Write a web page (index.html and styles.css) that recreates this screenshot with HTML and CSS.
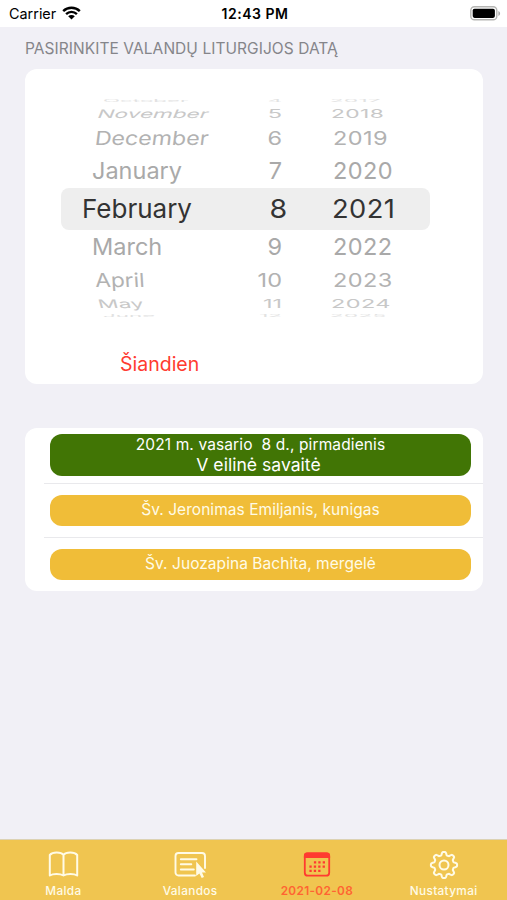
FILE: index.html
```html
<!DOCTYPE html>
<html lang="lt">
<head>
    <meta charset="UTF-8">
    <meta name="viewport" content="width=device-width, initial-scale=1.0">
    <title>Valandų liturgija</title>
    <link rel="stylesheet" href="styles.css">
</head>
<body>
    <header class="status-bar">
        <div class="carrier">
            <span>Carrier</span>
            <svg class="wifi" viewBox="0 0 19 14" width="19" height="14">
                <path d="M1.2 5.1a11.8 11.8 0 0 1 16.6 0M4.1 8.1a7.7 7.7 0 0 1 10.8 0" fill="none" stroke="#000" stroke-width="2.4"/>
                <path d="M6.2 10.3a4.7 4.7 0 0 1 6.6 0L9.5 13.6z"/>
            </svg>
        </div>
        <div class="clock">12:43 PM</div>
        <svg class="battery" viewBox="0 0 31 15" width="31" height="15">
            <rect x=".8" y=".8" width="26" height="13" rx="3.6" fill="#fff" stroke="#b5b5b3" stroke-width="1.4"/>
            <rect x="2.7" y="2.7" width="22.2" height="9.2" rx="1.8"/>
            <path d="M28.4 5v5c1-.4 1.7-1.4 1.7-2.5s-.7-2.1-1.7-2.5z" fill="#aaa"/>
        </svg>
    </header>

    <main>
        <h1 class="section-title">PASIRINKITE VALANDŲ LITURGIJOS DATĄ</h1>

        <section class="card date-card">
            <div class="picker">
                <div class="row far-4 up"><span class="month">October</span><span class="day">4</span><span class="year">2017</span></div>
                <div class="row far-3 up"><span class="month">November</span><span class="day">5</span><span class="year">2018</span></div>
                <div class="row far-2 up"><span class="month">December</span><span class="day">6</span><span class="year">2019</span></div>
                <div class="row far-1 up"><span class="month">January</span><span class="day">7</span><span class="year">2020</span></div>
                <div class="row selected"><span class="month">February</span><span class="day">8</span><span class="year">2021</span></div>
                <div class="row far-1 down"><span class="month">March</span><span class="day">9</span><span class="year">2022</span></div>
                <div class="row far-2 down"><span class="month">April</span><span class="day">10</span><span class="year">2023</span></div>
                <div class="row far-3 down"><span class="month">May</span><span class="day">11</span><span class="year">2024</span></div>
                <div class="row far-4 down"><span class="month">June</span><span class="day">12</span><span class="year">2025</span></div>
            </div>
            <button class="today">Šiandien</button>
        </section>

        <section class="card day-list">
            <div class="day-item first">
                <div class="pill green">
                    <span class="date">2021 m. vasario&nbsp; 8 d., pirmadienis</span>
                    <span class="week">V eilinė savaitė</span>
                </div>
            </div>
            <div class="day-item">
                <div class="pill gold">Šv. Jeronimas Emiljanis, kunigas</div>
            </div>
            <div class="day-item">
                <div class="pill gold">Šv. Juozapina Bachita, mergelė</div>
            </div>
        </section>
    </main>

    <nav class="tab-bar">
        <a class="tab">
            <svg viewBox="0 0 32 32" width="32" height="32" fill="none" stroke="currentColor" stroke-width="2" stroke-linejoin="round" stroke-linecap="round">
                <path d="M16.500 6C14 2.800 5.500 2.800 2.800 6V26.500C6 24.400 13 24.400 16.500 26.500C20 24.400 27 24.400 30.200 26.500V6C27.500 2.800 19 2.800 16.500 6ZM16.500 6V26.500"/>
            </svg>
            <span>Malda</span>
        </a>
        <a class="tab">
            <svg viewBox="0 0 32 32" width="32" height="32" fill="none" stroke="currentColor" stroke-width="1.9" stroke-linecap="round">
                <path d="M21 26.500H4.500a3 3 0 0 1-3-3V7a3 3 0 0 1 3-3h23.500a3 3 0 0 1 3 3V19"/>
                <path d="M6.800 10.200H22.500M6.800 15.300h10.500M6.800 20.500h13"/>
                <path d="M22.200 12.500v14.500l3.200-2.600 2.300 4.600 2.300-1-2-4.500h4z" fill="currentColor" stroke="none"/>
            </svg>
            <span>Valandos</span>
        </a>
        <a class="tab active">
            <svg viewBox="0 0 32 32" width="32" height="32" fill="none" stroke="currentColor">
                <rect x="3.800" y="4.300" width="24.400" height="22.400" rx="3" stroke-width="1.8"/>
                <path d="M2.900 9V6.500a3 3 0 0 1 3-3h20.200a3 3 0 0 1 3 3v2.500z" fill="currentColor" stroke="none"/>
                <path d="M12.900 13.300h12.500M8.400 17.600h17M8.400 21.900h12" stroke-width="2.300" stroke-dasharray="2.300 2.100"/>
            </svg>
            <span>2021-02-08</span>
        </a>
        <a class="tab">
            <svg viewBox="0 0 32 32" width="32" height="32" fill="none" stroke="currentColor" stroke-width="2" stroke-linejoin="round">
                <path id="gear" d=""/>
                <circle cx="16" cy="16" r="4.500"/>
            </svg>
            <span>Nustatymai</span>
        </a>
    </nav>
    <script src="script.js"></script>
</body>
</html>
```
FILE: styles.css
```css
* {
    box-sizing: border-box;
}

body {
    margin: 0;
    height: 900px;
    display: flex;
    flex-direction: column;
    overflow: hidden;
    background: #f1f0f6;
    font-family: Inter, "Liberation Sans", sans-serif;
}

.status-bar {
    display: grid;
    grid-template-columns: 1fr auto 1fr;
    align-items: center;
    height: 27px;
    padding: 0 6px 0 9px;
    background: #fff;
    color: #000;
}

.carrier {
    display: flex;
    align-items: center;
    gap: 6px;
    font-size: 14.4px;
}

.wifi {
    margin-top: -2px;
}

.clock {
    font-weight: 600;
    font-size: 14px;
    letter-spacing: 0.5px;
}

.battery {
    justify-self: end;
}

main {
    flex: 1;
    padding: 0 24px 0 25px;
}

.section-title {
    margin: 0;
    height: 42px;
    line-height: 43px;
    font-size: 15.5px;
    font-weight: 400;
    letter-spacing: 0.06px;
    color: #85858a;
    white-space: nowrap;
}

.card {
    background: #fff;
    border-radius: 12px;
}

.date-card {
    height: 315px;
    padding: 27px 53px 0 36px;
}

.picker {
    height: 226px;
}

.row {
    display: grid;
    grid-template-columns: 160px 66px 1fr;
    grid-template-rows: 100%;
    align-items: center;
    height: 34px;
    font-size: 23.5px;
    line-height: 1;
    color: #a9a9a9;
    white-space: nowrap;
}

.month {
    justify-self: start;
    margin-left: 31px;
    transform-origin: left center;
}

.day {
    justify-self: end;
    margin-right: 5px;
    transform-origin: right center;
}

.year {
    justify-self: start;
    margin-left: 46px;
    letter-spacing: 0.4px;
    transform-origin: left center;
}

.selected {
    height: 42px;
    font-size: 26px;
    color: #333;
    background: #eee;
    border-radius: 8px;
}

.selected .month {
    margin-left: 21px;
}

.selected .day {
    margin-right: 0;
    transform: scaleX(1.1);
}

.selected .year {
    margin-left: 45px;
    transform: scaleX(1.05);
}

.far-2 {
    height: 32px;
    color: #b2b2b2;
}

.far-2 .month {
    margin-left: 34px;
}

.far-2 span {
    transform: scaleY(0.82);
}

.far-2.up .month {
    transform: scale(0.985, 0.82) skewX(-6deg);
}

.far-2.down .month {
    transform: scale(0.97, 0.82) skewX(3deg);
}

.far-3 {
    height: 16px;
    color: #c8c8c8;
}

.far-3 .month {
    margin-left: 37px;
}

.far-3 .year {
    margin-left: 44px;
}

.far-3 span {
    transform: scaleY(0.5);
}

.far-3.up .year {
    transform: scale(0.97, 0.5);
}

.far-3.up .month {
    transform: scale(0.96, 0.5) skewX(-12deg);
}

.far-3.down .month {
    transform: scale(0.96, 0.5) skewX(8deg);
}

.far-4 {
    height: 10px;
    color: #e2e2e2;
}

.far-4 .month {
    margin-left: 42px;
}

.far-4 .year {
    margin-left: 43px;
}

.far-4 span {
    transform: scale(0.95, 0.15);
}

.far-4.down {
    height: 8px;
}

.today {
    display: block;
    margin: 30px 0 0 59px;
    padding: 0;
    border: none;
    background: none;
    font-family: inherit;
    font-size: 19.5px;
    line-height: 24px;
    color: #ff3b30;
}

.day-list {
    height: 163px;
    margin-top: 44px;
    padding-left: 19px;
    overflow: hidden;
}

.day-item {
    height: 54px;
    display: flex;
    align-items: center;
    padding: 0 12px 0 6px;
    border-top: 1px solid #e9e9ec;
}

.day-item.first {
    height: 54.5px;
    border-top: none;
}

.pill {
    flex: 1;
    height: 31px;
    display: flex;
    flex-direction: column;
    align-items: center;
    justify-content: center;
    border-radius: 12px;
    font-size: 15.5px;
    line-height: 20px;
    letter-spacing: 0.05px;
    color: #fffbe6;
    white-space: nowrap;
}

.green {
    height: 42px;
    background: #417505;
    color: #fff;
}

.gold {
    background: #f0bd38;
}

.date {
    letter-spacing: 0.12px;
}

.week {
    font-size: 17.6px;
    letter-spacing: 0;
    margin-right: 4px;
}

.tab-bar {
    display: grid;
    grid-template-columns: repeat(4, 1fr);
    height: 61px;
    border-top: 1px solid #dcd2b4;
    background: #f0c550;
}

.tab {
    display: flex;
    flex-direction: column;
    align-items: center;
    gap: 2px;
    padding-top: 9px;
    color: #fffbe6;
    font-size: 11.8px;
    font-weight: 500;
    line-height: 16px;
    letter-spacing: 0.35px;
}

.active {
    color: #ff3b30;
}

.active span {
    color: #ff6432;
    font-weight: 600;
}
```
FILE: script.js
```js
// eight-toothed gear outline for the settings tab
const points = [];
for (let i = 0; i < 96; i++) {
    const angle = i / 96 * Math.PI * 2;
    const wave = Math.tanh(2.2 * Math.cos(8 * angle)) / Math.tanh(2.2);
    const radius = 11.5 + 1.6 * wave;
    points.push((16 + radius * Math.sin(angle)).toFixed(2) + ' ' + (16 - radius * Math.cos(angle)).toFixed(2));
}
document.getElementById('gear').setAttribute('d', 'M' + points.join('L') + 'Z');
```
